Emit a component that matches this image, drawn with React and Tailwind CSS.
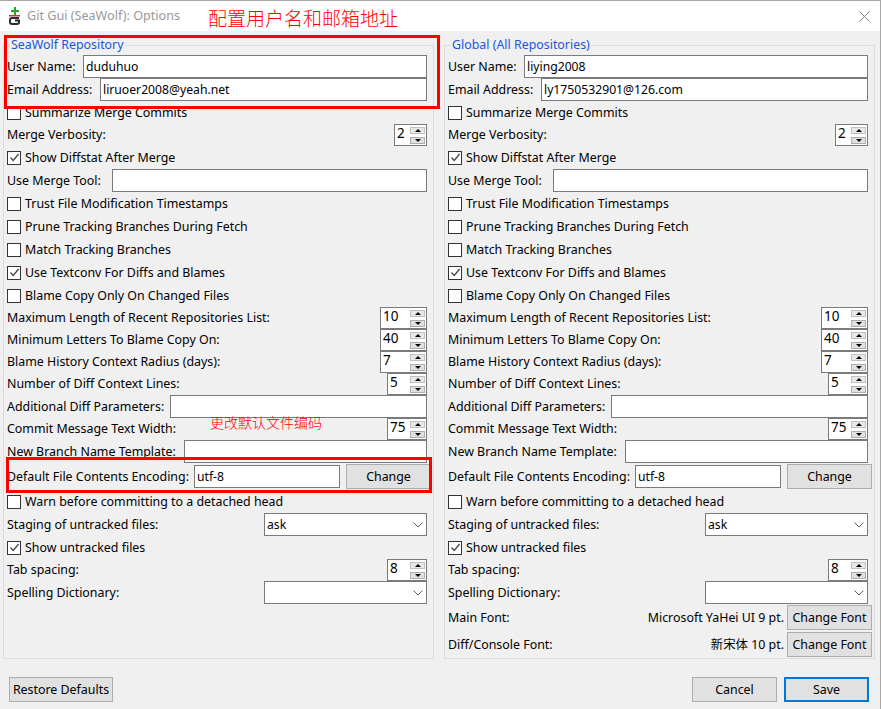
const ChevronIcon = () => (
  <svg width="10" height="6" viewBox="0 0 10 6" fill="none" stroke="#606060" strokeWidth="1">
    <path d="M0.5 0.5 L5 5 L9.5 0.5" />
  </svg>
)

const CheckMark = () => (
  <svg width="11" height="11" viewBox="0 0 11 11" fill="none" stroke="#444" strokeWidth="1.3">
    <path d="M1.5 5.5 L4.2 8.4 L9.6 2" />
  </svg>
)

function GitIcon() {
  return (
    <svg width="12" height="18" viewBox="0 0 12 18">
      <path d="M5 0h2v3h3v2H7v3H5V5H2V3h3z" fill="#2da52d" />
      <rect x="0" y="8" width="11" height="1.5" fill="#d0342c" />
      <path d="M10 11 H3 Q1 11 1 13 V15 Q1 17 3 17 H8 Q10 17 10 15 V13.5 H6" fill="none" stroke="#2b2b2b" strokeWidth="2" />
    </svg>
  )
}

function Check({ label, checked, height = 'h-[23px]' }) {
  return (
    <div className={`flex items-center ${height}`}>
      <span className="w-[14px] h-[14px] border border-[#333] bg-white flex items-center justify-center shrink-0">
        {checked && <CheckMark />}
      </span>
      <span className="ml-[4px] pt-[2px]">{label}</span>
    </div>
  )
}

function Spin({ label, value, width }) {
  return (
    <div className="flex items-center justify-between h-[22px] w-[420px]">
      <span>{label}</span>
      <div className={`h-[22px] bg-white border border-[#7a7a7a] flex items-center justify-between pl-[2px] pr-[1px] ${width}`}>
        <span className="text-[13.5px] -mt-[3px]">{value}</span>
        <div className="flex flex-col gap-[3px]">
          <span className="w-[15px] h-[7px] bg-[#e8e8e8] border border-[#c0c0c0] flex items-center justify-center">
            <span className="w-0 h-0 border-x-[3px] border-x-transparent border-b-[3px] border-b-black" />
          </span>
          <span className="w-[15px] h-[7px] bg-[#e1e1e1] border border-[#adadad] flex items-center justify-center">
            <span className="w-0 h-0 border-x-[3px] border-x-transparent border-t-[3px] border-t-black" />
          </span>
        </div>
      </div>
    </div>
  )
}

function Field({ label, value, width }) {
  return (
    <div className="flex items-center justify-between h-[23px] w-[420px]">
      <span className="pt-[2px]">{label}</span>
      <div className={`h-[23px] bg-white border border-[#7a7a7a] flex items-center pl-[2px] pt-px ${width}`}>
        <span className="text-[12.2px]">{value}</span>
      </div>
    </div>
  )
}

function Dropdown({ label, value }) {
  return (
    <div className="flex items-center justify-between h-[23px] w-[420px]">
      <span className="pt-[2px]">{label}</span>
      <div className="w-[163px] h-[23px] bg-white border border-[#7a7a7a] flex items-center justify-between pl-[2px] pr-[3px]">
        <span className="text-[12.2px] pt-px">{value}</span>
        <ChevronIcon />
      </div>
    </div>
  )
}

function Btn({ children, width, primary }) {
  return (
    <button className={`h-[25px] pt-px flex items-center justify-center bg-[#e1e1e1] ${width} ${primary ? 'border-2 border-[#0078d7]' : 'border border-[#adadad]'}`}>
      {children}
    </button>
  )
}

function FontRow({ label, value, className }) {
  return (
    <div className={`flex items-center justify-between h-[25px] w-[424px] ${className}`}>
      <span className="pt-px">{label}</span>
      <div className="flex items-center gap-[3px]">
        <span className="pt-px">{value}</span>
        <Btn width="w-[85px]">Change Font</Btn>
      </div>
    </div>
  )
}

function Group({ title, user, email, extra }) {
  return (
    <div className="relative w-[431px] h-[614px] border border-[#dcdcdc] pl-[3px] pt-[9px]">
      <span className="absolute left-[6px] top-[-7px] px-px bg-[#f0f0f0] text-[#2255dd]">{title}</span>
      <Field label="User Name:" value={user} width="w-[344px]" />
      <Field label="Email Address:" value={email} width="w-[327px]" />
      <Check label="Summarize Merge Commits" />
      <Spin label="Merge Verbosity:" value="2" width="w-[33px]" />
      <Check label="Show Diffstat After Merge" checked />
      <Field label="Use Merge Tool:" value="" width="w-[315px]" />
      <Check label="Trust File Modification Timestamps" />
      <Check label="Prune Tracking Branches During Fetch" />
      <Check label="Match Tracking Branches" />
      <Check label="Use Textconv For Diffs and Blames" checked />
      <Check label="Blame Copy Only On Changed Files" />
      <Spin label="Maximum Length of Recent Repositories List:" value="10" width="w-[47px]" />
      <Spin label="Minimum Letters To Blame Copy On:" value="40" width="w-[47px]" />
      <Spin label="Blame History Context Radius (days):" value="7" width="w-[47px]" />
      <Spin label="Number of Diff Context Lines:" value="5" width="w-[40px]" />
      <Field label="Additional Diff Parameters:" value="" width="w-[257px]" />
      <Spin label="Commit Message Text Width:" value="75" width="w-[40px]" />
      <Field label="New Branch Name Template:" value="" width="w-[243px]" />
      <div className="flex items-center h-[25px] w-[424px] mt-px">
        <span className="flex-1 pt-px">Default File Contents Encoding:</span>
        <div className="w-[146px] h-[23px] bg-white border border-[#7a7a7a] flex items-center pl-[2px] pt-px mr-[6px]">
          <span className="text-[12.2px]">utf-8</span>
        </div>
        <Btn width="w-[85px]">Change</Btn>
      </div>
      <Check label="Warn before committing to a detached head" height="h-[23px] mt-px" />
      <Dropdown label="Staging of untracked files:" value="ask" />
      <Check label="Show untracked files" checked />
      <Spin label="Tab spacing:" value="8" width="w-[40px]" />
      <Dropdown label="Spelling Dictionary:" value="" />
      {extra}
    </div>
  )
}

export default function App() {
  return (
    <div className="relative w-[881px] h-[709px] overflow-hidden bg-[#f0f0f0] text-black text-[12.4px] leading-none border-t border-r border-[#a8a8a8] font-['Noto_Sans','Noto_Sans_CJK_SC',sans-serif]">
      <div className="h-[30px] bg-white flex items-center justify-between pl-[9px] pr-[10px]">
        <div className="flex items-center gap-[6px]">
          <GitIcon />
          <span className="text-[12.6px] text-[#999999]">Git Gui (SeaWolf): Options</span>
        </div>
        <svg width="11" height="11" viewBox="0 0 11 11" stroke="#808080" strokeWidth="1">
          <path d="M0.5 0.5 L10.5 10.5 M10.5 0.5 L0.5 10.5" />
        </svg>
      </div>

      <div className="flex gap-[10px] pl-[3px] pt-[14px]">
        <Group title="SeaWolf Repository" user="duduhuo" email="liruoer2008@yeah.net" />
        <Group
          title="Global (All Repositories)"
          user="liying2008"
          email="ly1750532901@126.com"
          extra={
            <>
              <FontRow label="Main Font:" value="Microsoft YaHei UI 9 pt." className="mt-px" />
              <FontRow label="Diff/Console Font:" value="新宋体 10 pt." className="mt-[2px]" />
            </>
          }
        />
      </div>

      <div className="flex items-center justify-between pl-[9px] pr-[11px] pt-[18px]">
        <Btn width="w-[104px]">Restore Defaults</Btn>
        <div className="flex gap-[7px]">
          <Btn width="w-[85px]">Cancel</Btn>
          <Btn width="w-[85px]" primary>Save</Btn>
        </div>
      </div>

      {/* annotations drawn over the screenshot */}
      <div className="absolute left-[4px] top-[34px] w-[436px] h-[74px] border-[3px] border-[#ff0000]" />
      <div className="absolute left-[6px] top-[456px] w-[426px] h-[36px] border-[3px] border-[#ff0000]" />
      <span className="absolute left-[208px] top-[9px] text-[19px] font-light text-[#ff0000]">配置用户名和邮箱地址</span>
      <span className="absolute left-[210px] top-[415px] text-[14px] font-light text-[#ff0000]">更改默认文件编码</span>
    </div>
  )
}
